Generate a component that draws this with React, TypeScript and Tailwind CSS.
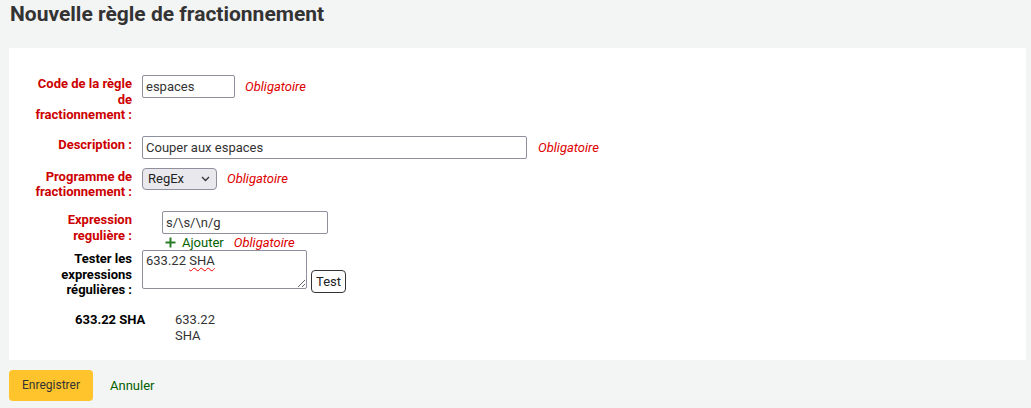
import React from "react";

const labelReq =
  "w-[100px] shrink-0 text-right font-bold text-[#cc0000] leading-[15.6px]";
const inputClass =
  "h-[23px] rounded-[2px] border border-[#8f8f9d] bg-white px-[3px] text-[13px] text-[#333] outline-none";

function Required() {
  return <span className="italic text-[#dd0000]">Obligatoire</span>;
}

function PlusIcon() {
  return (
    <svg width="11" height="11" viewBox="0 0 11 11" className="text-[#2a7d2a]">
      <path d="M5.5 0.5v10M0.5 5.5h10" stroke="currentColor" strokeWidth="2" />
    </svg>
  );
}

export default function App() {
  return (
    <div
      className="min-h-[408px] bg-[#f3f4f4] text-[13px] text-[#333]"
      style={{ fontFamily: "Roboto, 'Liberation Sans', sans-serif" }}
    >
      <h1 className="px-[10px] pt-[2px] text-[21px] font-bold leading-[25px] text-[#333]">
        Nouvelle règle de fractionnement
      </h1>

      <div className="ml-[9px] mr-[5px] mt-[21px] bg-white pb-[16px] pl-[23px] pt-[27px]">
        {/* Code */}
        <div className="flex items-start">
          <label className={`${labelReq} mt-[1px]`}>Code de la règle de fractionnement :</label>
          <div className="ml-[10px] flex items-center gap-[10px]">
            <input className={`${inputClass} w-[93px]`} defaultValue="espaces" />
            <Required />
          </div>
        </div>

        {/* Description */}
        <div className="mt-[13px] flex items-start">
          <label className={`${labelReq} mt-[1px]`}>Description :</label>
          <div className="ml-[10px] flex items-center gap-[11px]">
            <input className={`${inputClass} h-[22px] w-[385px]`} defaultValue="Couper aux espaces" />
            <Required />
          </div>
        </div>

        {/* Programme */}
        <div className="mt-[9px] flex items-start">
          <label className={`${labelReq} mt-[1px]`}>Programme de fractionnement :</label>
          <div className="ml-[10px] flex items-center gap-[10px]">
            <div className="flex h-[22px] w-[75px] items-center justify-between rounded-[4px] border border-[#8f8f9d] bg-[#e9e9ed] pl-[5px] pr-[6px] text-[13px] text-[#222]">
              <span>RegEx</span>
              <svg width="9" height="6" viewBox="0 0 9 6">
                <path d="M1 1l3.5 3.5L8 1" stroke="#333" strokeWidth="1.3" fill="none" />
              </svg>
            </div>
            <Required />
          </div>
        </div>

        {/* Expression */}
        <div className="mt-[11px] flex items-start">
          <label className={`${labelReq} mt-[1px]`}>Expression regulière :</label>
          <div className="ml-[30px] flex flex-col">
            <input className={`${inputClass} h-[22px] w-[166px]`} defaultValue="s/\s/\n/g" />
            <div className="flex h-[16px] items-center pl-[3px] pt-[1px]">
              <PlusIcon />
              <span className="ml-[6px] text-[#006100]">Ajouter</span>
              <span className="ml-[10px]">
                <Required />
              </span>
            </div>
          </div>
        </div>

        {/* Tester */}
        <div className="flex items-start">
          <label className="mt-[1px] w-[100px] shrink-0 text-right font-bold leading-[15.6px] text-black">
            Tester les expressions régulières :
          </label>
          <div className="ml-[10px] flex items-start">
            <div className="h-[39px] w-[165px] resize overflow-auto rounded-[2px] border border-[#8f8f9d] bg-white px-[3px] pt-[2px] leading-[16px] text-[#333]">
              633.22{" "}
              <span className="underline decoration-[#e00] decoration-wavy decoration-1 underline-offset-[2px]">
                SHA
              </span>
            </div>
            <button className="ml-[4px] mt-[20px] h-[23px] rounded-[4px] border border-[#333] bg-white px-[4px] text-[13px] text-[#222]">
              Test
            </button>
          </div>
        </div>

        {/* Result */}
        <div className="ml-[43px] mt-[14px] flex items-start leading-[16px]">
          <span className="w-[100px] shrink-0 font-bold text-black">633.22 SHA</span>
          <span className="w-[50px]">633.22 SHA</span>
        </div>
      </div>

      <div className="ml-[9px] mt-[10px] flex items-center">
        <button className="h-[31px] w-[84px] rounded-[4px] bg-[#ffc32b] text-[12px] text-[#333]">
          Enregistrer
        </button>
        <a className="ml-[17px] text-[#006100]">Annuler</a>
      </div>
    </div>
  );
}
